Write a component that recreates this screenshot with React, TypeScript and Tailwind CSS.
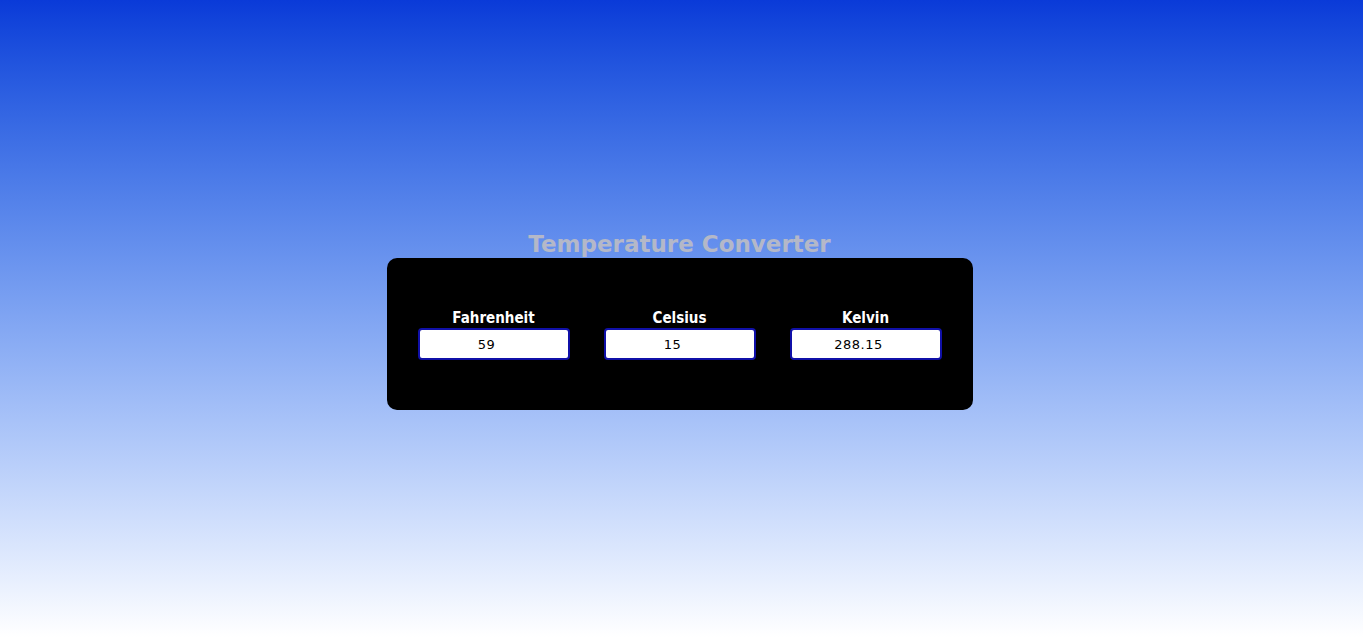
import React, { useState } from "react";

export default function App() {
  const [f, setF] = useState("59");
  const [c, setC] = useState("15");
  const [k, setK] = useState("288.15");
  const fields = [
    { label: "Fahrenheit", value: f, set: setF },
    { label: "Celsius", value: c, set: setC },
    { label: "Kelvin", value: k, set: setK },
  ];
  return (
    <div className="w-[1363px] h-[637px] bg-gradient-to-b from-[#0a3ad8] to-white flex flex-col items-center pt-[230px] pr-[4px] font-['DejaVu_Sans',sans-serif]">
      <h1 className="text-[23px] leading-[28px] font-bold text-[#b4b8c8]">
        Temperature Converter
      </h1>
      <div className="w-[586px] h-[152px] bg-black rounded-[10px] flex justify-center gap-[34px] pt-[51px]">
        {fields.map((fl) => (
          <div key={fl.label} className="flex flex-col items-center w-[152px]">
            <label className="text-white font-bold text-[15px] leading-[19px] font-['DejaVu_Sans_Condensed','DejaVu_Sans',sans-serif]">
              {fl.label}
            </label>
            <input
              value={fl.value}
              onChange={(e) => fl.set(e.target.value)}
              className="mt-[0px] w-[152px] h-[32px] bg-white border-2 border-[#1010a8] rounded-[4px] text-center pr-[14px] text-[13px] text-black tracking-[0.5px] outline-none font-['DejaVu_Sans',sans-serif]"
            />
          </div>
        ))}
      </div>
    </div>
  );
}
